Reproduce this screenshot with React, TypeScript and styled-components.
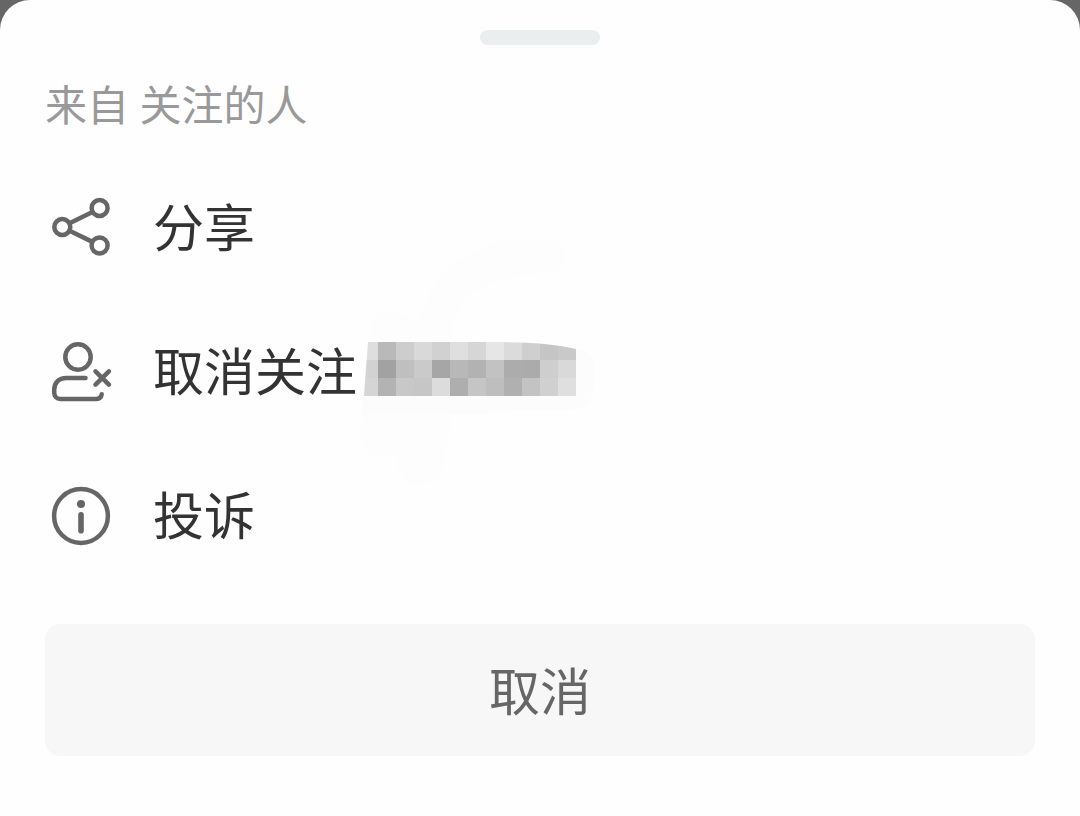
import React from "react";
import styled, { createGlobalStyle } from "styled-components";

const GlobalStyle = createGlobalStyle`
  *, *::before, *::after { box-sizing: border-box; }
  body {
    margin: 0;
    background: #666666;
    font-family: Roboto, "Noto Sans CJK SC", sans-serif;
  }
`;

const Sheet = styled.main`
  display: flex;
  flex-direction: column;
  min-height: 100vh;
  padding: 30px 45px 60px;
  background: #fefefe;
  border-radius: 30px 30px 0 0;
`;

const Handle = styled.div`
  align-self: center;
  width: 120px;
  height: 15px;
  border-radius: 8px;
  background: #eaeeef;
`;

const Heading = styled.h1`
  margin: 32px 0 19px;
  font-size: 42px;
  line-height: 60px;
  font-weight: 400;
  color: #999999;
`;

const Actions = styled.ul`
  margin: 0 0 36px;
  padding: 0;
  list-style: none;
`;

const Action = styled.button`
  display: flex;
  align-items: center;
  width: 100%;
  height: 144px;
  padding: 0;
  border: 0;
  background: none;
  color: #333333;
  font: inherit;
  font-size: 51px;
  line-height: 72px;
  text-align: left;
  cursor: pointer;
`;

const Label = styled.span`
  padding-top: 4px;
`;

const Icon = styled.svg`
  flex: none;
  width: 72px;
  height: 72px;
  margin-right: 36px;
  fill: none;
  stroke: #666666;
  stroke-width: 4.5;
  stroke-linecap: round;
  stroke-linejoin: round;
`;

const Mosaic = styled.svg`
  flex: none;
  width: 237px;
  height: 252px;
  margin: -54px 0 -54px 3px;
  overflow: visible;
`;

const CancelButton = styled.button`
  width: 100%;
  height: 132px;
  padding: 8px 0 0;
  border: 0;
  border-radius: 15px;
  background: #f7f7f7;
  color: #666666;
  font: inherit;
  font-size: 51px;
  line-height: 72px;
  cursor: pointer;
`;

const ShareIcon = () => (
  <Icon viewBox="0 0 72 72" aria-hidden="true">
    <circle cx="17.3" cy="35" r="8" />
    <circle cx="54.6" cy="16" r="8" />
    <circle cx="54.6" cy="53.4" r="8" />
    <path d="M24.5 31.2 47 20.2M24.5 38.8 47 49.6" />
  </Icon>
);

const UnfollowIcon = () => (
  <Icon viewBox="0 0 72 72" aria-hidden="true">
    <circle cx="33" cy="21" r="12.7" />
    <path d="M40.5 42H21.5C13.5 42 9.2 47 9.2 54V56.5C9.2 60.500 11.500 63 15.500 63H50C54 63 56.200 61.500 56.700 58.300" />
    <path d="M50.500 35.300 63.900 48.700M63.900 35.300 50.500 48.700" />
  </Icon>
);

const ReportIcon = () => (
  <Icon viewBox="0 0 72 72" aria-hidden="true">
    <circle cx="36" cy="36" r="26.900" />
    <circle cx="36" cy="24" r="4" fill="#666666" stroke="none" />
    <path d="M36 34.700V50.800" strokeWidth="5.6" />
  </Icon>
);

const shades = [
  ["#dedede", "#b9b9b9", "#cdcdcd", "#d9d9d9", "#d1d1d1", "#dfdfdf", "#d6d6d6", "#e6e6e6", "#dbdbdb", "#cfcfcf", "#c5c5c5", "#c9c9c9"],
  ["#d2d2d2", "#a2a2a2", "#bfbfbf", "#cacaca", "#a6a6a6", "#b8b8b8", "#b2b2b2", "#c2c2c2", "#acacac", "#ababab", "#cecece", "#d9d9d9"],
  ["#d5d5d5", "#b3b3b3", "#c8c8c8", "#c6c6c6", "#dcdcdc", "#aeaeae", "#c5c5c5", "#bebebe", "#b0b0b0", "#c3c3c3", "#d0d0d0", "#dfdfdf"],
];

const HiddenName = () => (
  <Mosaic viewBox="360 246 237 252" role="img" aria-label="用户名已隐藏">
    <defs>
      <clipPath id="brush">
        <path d="M368 342H490C522 342 552 343 576 349V396H364Z" />
      </clipPath>
    </defs>
    <path
      d="M370 342C370 322 376 311 390 311C402 311 410 317 414 326C424 310 428 292 438 278C455 258 485 243 515 239L548 238C570 239 571 271 550 273C515 274 485 282 466 298C458 310 452 325 451 336L449 414C452 430 448 444 445 452C445 468 440 478 430 481C415 489 399 487 396 455C375 460 362 455 361 440L362 396Z"
      fill="#fdfdfd"
    />
    <path
      d="M363 396V414H480C520 408 560 411 580 409C593 405 595 390 595 365C594 355 587 352 576 349V396Z"
      fill="#fcfcfc"
    />
    <g clipPath="url(#brush)" shapeRendering="crispEdges">
      {shades.map((row, y) =>
        row.map((fill, x) => (
          <rect key={`${x}-${y}`} x={360 + x * 18} y={342 + y * 18} width="18" height="18" fill={fill} />
        ))
      )}
    </g>
  </Mosaic>
);

export default function App() {
  return (
    <>
      <GlobalStyle />
      <Sheet>
        <Handle />
        <Heading>来自 关注的人</Heading>
        <Actions>
          <li>
            <Action type="button">
              <ShareIcon />
              <Label>分享</Label>
            </Action>
          </li>
          <li>
            <Action type="button">
              <UnfollowIcon />
              <Label>取消关注</Label>
              <HiddenName />
            </Action>
          </li>
          <li>
            <Action type="button">
              <ReportIcon />
              <Label>投诉</Label>
            </Action>
          </li>
        </Actions>
        <CancelButton type="button">取消</CancelButton>
      </Sheet>
    </>
  );
}
